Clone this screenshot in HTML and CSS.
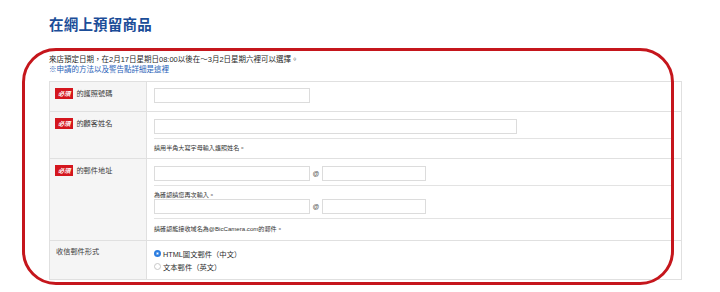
FILE: index.html
```html
<!DOCTYPE html>
<html lang="zh-Hant">
<head>
<meta charset="utf-8">
<title>在網上預留商品</title>
<link rel="stylesheet" href="styles.css">
</head>
<body>
<div class="page">
  <h1 class="title">在網上預留商品</h1>
  <p class="intro">來店預定日期，在2月17日星期日08:00以後在～3月2日星期六裡可以選擇。</p>
  <p class="intro"><a class="link" href="#">※申請的方法以及警告點詳細是這裡</a></p>

  <div class="form">
    <div class="row">
      <div class="label"><span class="badge">必須</span><span class="label-text">的護照號碼</span></div>
      <div class="cell cell-first">
        <div class="line"><span class="input w156"></span></div>
      </div>
    </div>
    <div class="row">
      <div class="label"><span class="badge">必須</span><span class="label-text">的顧客姓名</span></div>
      <div class="cell">
        <div class="line sub"><span class="input w363"></span></div>
        <div class="note note-name">請用半角大寫字母輸入護照姓名。</div>
      </div>
    </div>
    <div class="row">
      <div class="label"><span class="badge">必須</span><span class="label-text">的郵件地址</span></div>
      <div class="cell">
        <div class="line sub"><span class="input w156"></span><span class="at">@</span><span class="input w104"></span></div>
        <div class="note note-again">為確認請您再次輸入。</div>
        <div class="line sub"><span class="input w156"></span><span class="at">@</span><span class="input w104"></span></div>
        <div class="note note-domain">請確認能接收域名為@BicCamera.com的郵件。</div>
      </div>
    </div>
    <div class="row">
      <div class="label label-plain"><span class="label-text">收信郵件形式</span></div>
      <div class="cell radios">
        <div class="radio-row"><span class="radio checked"></span><span class="radio-text">HTML圖文郵件（中文）</span></div>
        <div class="radio-row"><span class="radio"></span><span class="radio-text">文本郵件（英文）</span></div>
      </div>
    </div>
  </div>
</div>
<div class="ring"></div>
</body>
</html>
```
FILE: styles.css
```css
* { box-sizing: border-box; }
html, body { margin: 0; padding: 0; background: #fff; }
body {
  position: relative;
  width: 720px;
  height: 292px;
  overflow: hidden;
  font-family: "Liberation Sans", "Noto Sans CJK TC", sans-serif;
  color: #333;
}
.page { padding: 15px 0 0 49px; }
.title {
  margin: 0;
  height: 20px;
  font-size: 14.5px;
  line-height: 20px;
  font-weight: 700;
  color: #1b4d98;
  letter-spacing: 0.2px;
}
.intro {
  margin: 0;
  height: 10px;
  font-size: 7.5px;
  line-height: 10px;
  color: #2a2a2a;
  white-space: nowrap;
}
.title + .intro { margin-top: 20px; }
.link { color: #1f62b8; text-decoration: none; }

.form {
  margin-top: 6px;
  width: 633px;
  border: 1px solid #e0e0e0;
}
.row {
  display: grid;
  grid-template-columns: 97px 1fr;
}
.row + .row { border-top: 1px solid #e0e0e0; }
.label {
  background: #f5f5f5;
  border-right: 1px solid #e0e0e0;
  padding: 6px 5px;
  display: flex;
  align-items: flex-start;
  gap: 3px;
  font-size: 7.2px;
  line-height: 11px;
  color: #3a3a3a;
}
.label-plain { padding-top: 5px; padding-left: 6px; }
.badge {
  display: inline-block;
  height: 11px;
  line-height: 11px;
  padding: 0 3px;
  background: #d4151d;
  color: #fff;
  font-size: 6.2px;
  font-weight: 700;
  font-style: italic;
}
.cell { padding: 7px 8px 0 7px; }
.cell-first { padding: 6px 8px 8px 7px; }
.line { display: flex; align-items: center; height: 15px; }
.line.sub { height: 20px; align-items: flex-start; border-bottom: 1px solid #e3e3e3; }
.input {
  display: block;
  height: 15px;
  border: 1px solid #dcdcdc;
  background: #fff;
}
.w156 { width: 156px; }
.w363 { width: 363px; }
.w104 { width: 104px; }
.at {
  width: 12px;
  height: 15px;
  line-height: 15px;
  text-align: center;
  font-size: 6.5px;
  font-weight: 700;
  color: #555;
}
.note {
  font-size: 6.1px;
  line-height: 9px;
  color: #333;
  white-space: nowrap;
}
.note-name { height: 19px; padding-top: 4px; }
.note-again { height: 13px; padding-top: 4px; }
.note-domain { height: 21px; padding-top: 5px; }
.radios { padding: 6px 8px 6px 7px; }
.radio-row {
  display: flex;
  align-items: center;
  gap: 2px;
  height: 13px;
  font-size: 7.3px;
  color: #2a2a2a;
}
.radio {
  width: 7px;
  height: 7px;
  border-radius: 50%;
  border: 1px solid #c8c8c8;
  background: #fff;
  flex: none;
}
.radio.checked {
  border: 2px solid #2b7de0;
  background: #fff;
  box-shadow: inset 0 0 0 0.5px #2b7de0;
}
.ring {
  position: absolute;
  left: 22px;
  top: 48px;
  width: 652px;
  height: 237px;
  border: 3px solid #c5161c;
  border-radius: 34px;
  pointer-events: none;
}
```
